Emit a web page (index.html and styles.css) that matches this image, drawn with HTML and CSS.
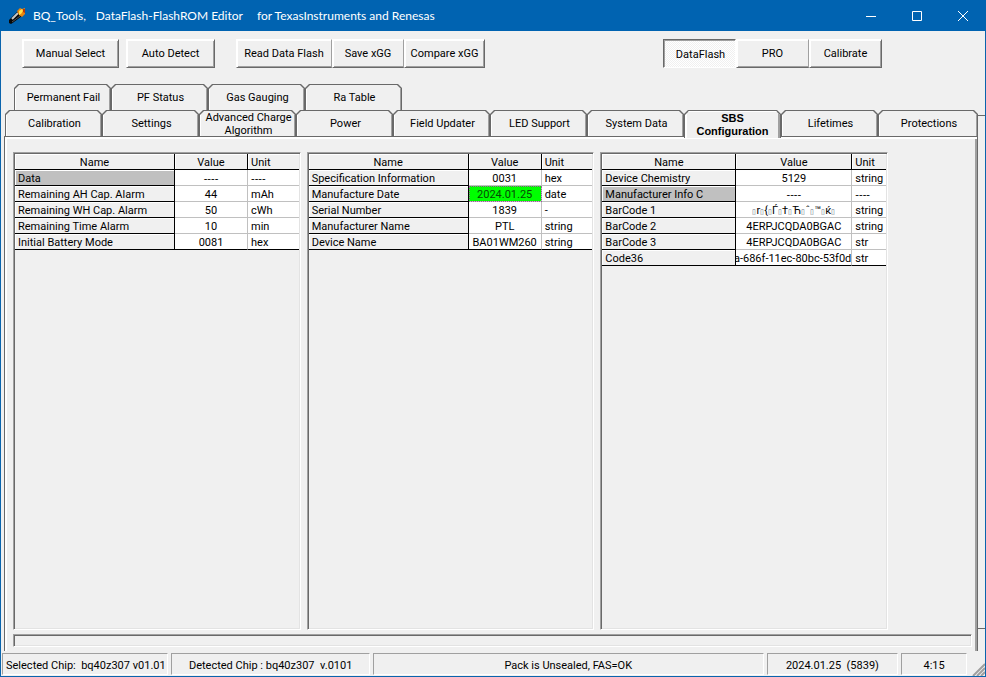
FILE: index.html
```html
<!DOCTYPE html>
<html lang="en">
<head>
  <meta charset="utf-8">
  <meta name="viewport" content="width=device-width,initial-scale=1">
  <title>BQ_Tools, DataFlash-FlashROM Editor</title>
  <link rel="stylesheet" href="styles.css">
</head>
<body>
  <div class="window">
    <header class="titlebar">
      <svg class="app-icon" width="16" height="16" viewBox="0 0 16 16" aria-hidden="true">
        <path d="M0 12 9 3l4 5-8 6-3 2-2-1z" fill="#080808"/>
        <path d="M3 11 9 5" stroke="#c8c8c8" stroke-width="2"/>
        <path d="M3 14l8-6" stroke="#555" stroke-width="1"/>
        <path d="M8 3l3-3 2 1 3-1v6l-3 3-3-2z" fill="#e8850c"/>
        <path d="M10 3l3-2 1 2-2 3-2 1z" fill="#ffe14a"/>
        <path d="M14 1h2v4l-2-1z" fill="#b8360a"/>
      </svg>
      <h1 class="title"><span>BQ_Tools,</span><span>DataFlash-FlashROM Editor</span><span class="title-for">for TexasInstruments and Renesas</span></h1>
      <div class="window-buttons">
        <button type="button" aria-label="Minimize"><svg width="12" height="12" viewBox="0 0 12 12"><path d="M1 6.5h10"/></svg></button>
        <button type="button" aria-label="Maximize"><svg width="12" height="12" viewBox="0 0 12 12"><path d="M1.5 1.5h9v9h-9z"/></svg></button>
        <button type="button" aria-label="Close"><svg width="12" height="12" viewBox="0 0 12 12"><path d="M1 1l10 10M11 1L1 11"/></svg></button>
      </div>
    </header>

    <div class="toolbar">
      <button type="button" class="btn btn-manual">Manual Select</button>
      <button type="button" class="btn btn-auto">Auto Detect</button>
      <div class="btn-group">
        <button type="button" class="btn btn-read">Read Data Flash</button>
        <button type="button" class="btn btn-save">Save xGG</button>
        <button type="button" class="btn btn-compare">Compare xGG</button>
      </div>
      <div class="btn-group modes">
        <button type="button" class="btn btn-mode pressed" aria-pressed="true">DataFlash</button>
        <button type="button" class="btn btn-mode">PRO</button>
        <button type="button" class="btn btn-mode">Calibrate</button>
      </div>
    </div>

    <nav class="tabs" role="tablist">
      <div class="tab-row tab-row-back">
        <button type="button" role="tab" class="tab">Permanent Fail</button>
        <button type="button" role="tab" class="tab">PF Status</button>
        <button type="button" role="tab" class="tab">Gas Gauging</button>
        <button type="button" role="tab" class="tab">Ra Table</button>
      </div>
      <div class="tab-row">
        <button type="button" role="tab" class="tab">Calibration</button>
        <button type="button" role="tab" class="tab">Settings</button>
        <button type="button" role="tab" class="tab">Advanced Charge Algorithm</button>
        <button type="button" role="tab" class="tab">Power</button>
        <button type="button" role="tab" class="tab">Field Updater</button>
        <button type="button" role="tab" class="tab">LED Support</button>
        <button type="button" role="tab" class="tab">System Data</button>
        <button type="button" role="tab" class="tab active" aria-selected="true">SBS Configuration</button>
        <button type="button" role="tab" class="tab">Lifetimes</button>
        <button type="button" role="tab" class="tab">Protections</button>
      </div>
    </nav>

    <main class="page">
      <div class="grids">
        <section class="grid-box">
          <table>
            <colgroup><col class="col-name"><col class="col-value"><col></colgroup>
            <thead>
              <tr><th>Name</th><th>Value</th><th>Unit</th></tr>
            </thead>
            <tbody>
              <tr class="group"><th>Data</th><td>----</td><td>----</td></tr>
              <tr><th>Remaining AH Cap. Alarm</th><td>44</td><td>mAh</td></tr>
              <tr><th>Remaining WH Cap. Alarm</th><td>50</td><td>cWh</td></tr>
              <tr><th>Remaining Time Alarm</th><td>10</td><td>min</td></tr>
              <tr><th>Initial Battery Mode</th><td>0081</td><td>hex</td></tr>
            </tbody>
          </table>
        </section>
        <section class="grid-box">
          <table>
            <colgroup><col class="col-name"><col class="col-value"><col></colgroup>
            <thead>
              <tr><th>Name</th><th>Value</th><th>Unit</th></tr>
            </thead>
            <tbody>
              <tr><th>Specification Information</th><td>0031</td><td>hex</td></tr>
              <tr><th>Manufacture Date</th><td class="selected">2024.01.25</td><td>date</td></tr>
              <tr><th>Serial Number</th><td>1839</td><td>-</td></tr>
              <tr><th>Manufacturer Name</th><td>PTL</td><td>string</td></tr>
              <tr><th>Device Name</th><td>BA01WM260</td><td>string</td></tr>
            </tbody>
          </table>
        </section>
        <section class="grid-box">
          <table>
            <colgroup><col class="col-name-short"><col class="col-value-wide"><col></colgroup>
            <thead>
              <tr><th>Name</th><th>Value</th><th>Unit</th></tr>
            </thead>
            <tbody>
              <tr><th>Device Chemistry</th><td>5129</td><td>string</td></tr>
              <tr class="group"><th>Manufacturer Info C</th><td>----</td><td>----</td></tr>
              <tr><th>BarCode 1</th><td><div class="raw"><i>▯</i>r<i>▯</i>{<i>▯</i>Ѓ<i>▯</i>†<i>▯</i>Ћ<i>▯</i>ˆ<i>▯</i>™<i>▯</i>ќ<i>▯</i></div></td><td>string</td></tr>
              <tr><th>BarCode 2</th><td>4ERPJCQDA0BGAC</td><td>string</td></tr>
              <tr><th>BarCode 3</th><td>4ERPJCQDA0BGAC</td><td>str</td></tr>
              <tr><th>Code36</th><td><div class="clipped">a-686f-11ec-80bc-53f0d</div></td><td>str</td></tr>
            </tbody>
          </table>
        </section>
      </div>
      <div class="progress"></div>
    </main>

    <footer class="statusbar">
      <div class="status status-left">Selected Chip:&nbsp; bq40z307 v01.01</div>
      <div class="status">Detected Chip : bq40z307&nbsp; v.0101</div>
      <div class="status">Pack is Unsealed, FAS=OK</div>
      <div class="status">2024.01.25&nbsp; (5839)</div>
      <div class="status">4:15</div>
      <svg class="grip" width="13" height="13" viewBox="0 0 13 13" aria-hidden="true">
        <path d="M1 13 13 1M5 13l8-8M9 13l4-4" stroke="#a0a0a0" stroke-width="2"/>
      </svg>
    </footer>
  </div>
</body>
</html>
```
FILE: styles.css
```css
* { box-sizing: border-box; }
body { margin: 0; background: #f0f0f0; color: #000; font: 11px/13px Roboto, "Liberation Sans", Arial, sans-serif; }
button { font: inherit; color: inherit; }

.window { display: flex; flex-direction: column; min-height: 100vh; border: 1px solid #0a64ad; border-top: 0; }

.titlebar { display: flex; align-items: center; height: 31px; margin: 0 -1px; padding-left: 9px; background: #0063b1; color: #fff; }
.title { display: flex; gap: 10px; margin: 0 0 0 8px; font: 12px/16px Lato, "Open Sans", sans-serif; white-space: pre; }
.title-for { margin-left: 4px; }
.window-buttons { display: flex; margin-left: auto; }
.window-buttons button { display: flex; align-items: center; justify-content: center; width: 46px; height: 31px; padding: 0; border: 0; background: none; }
.window-buttons path { fill: none; stroke: #fff; stroke-width: 1; }

/* toolbar */
.toolbar { display: flex; padding: 8px 103px 16px 21px; }
.btn { height: 29px; padding: 0; background: #f0f0f0; border: 1px solid; border-color: #fff #696969 #696969 #fff; box-shadow: inset 1px 1px #fff, inset -1px -1px #a0a0a0; white-space: nowrap; }
.btn-manual { width: 97px; margin-right: 7px; }
.btn-auto { width: 89px; margin-right: 21px; }
.btn-group { display: flex; }
.btn-group .btn:not(:last-child) { border-right-color: #a0a0a0; box-shadow: inset 1px 1px #fff, inset 0 -1px #a0a0a0; }
.btn-read { width: 96px; }
.btn-save { width: 72px; }
.btn-compare { width: 81px; }
.btn-mode { width: 73px; }
.modes { margin-left: auto; }
.modes .btn.pressed { border-color: #696969 #fff #fff #696969; box-shadow: inset 1px 1px #a0a0a0; background: repeating-conic-gradient(#fff 0 25%, #f0f0f0 0 50%) 0 0 / 2px 2px; padding: 2px 0 0 2px; }

/* tabs */
.tabs { padding: 0 7px 0 4px; }
.tab-row { display: grid; grid-template-columns: repeat(9, 97fr) 100fr; }
.tab-row-back { margin: 0 -9px 0 9px; }
.tab { position: relative; isolation: isolate; height: 26px; padding: 1px 0 0 2px; border: 0; background: #696969; clip-path: polygon(0 4px, 4px 0, calc(100% - 4px) 0, 100% 4px, 100% 100%, 0 100%); }
.tab::before { content: ""; position: absolute; z-index: -1; inset: 1px 1px 0 1px; background: linear-gradient(#a0a0a0, #a0a0a0) right / 1px 100% no-repeat, linear-gradient(90deg, #fff 1px, #f0f0f0 1px); clip-path: polygon(0 4px, 4px 0, calc(100% - 4px) 0, 100% 4px, 100% 100%, 0 100%); }
.tab.active { height: 28px; margin-bottom: -2px; z-index: 1; padding: 2px 8px 0; font-family: "Liberation Sans", Arial, sans-serif; font-weight: bold; }
.tab.active::before { background: linear-gradient(#a0a0a0, #a0a0a0) right / 2px 100% no-repeat, linear-gradient(#fff, #fff) top / 100% 1px no-repeat, linear-gradient(90deg, #fff 2px, #f0f0f0 2px); }

/* tab page */
.page { position: relative; display: flex; flex-direction: column; flex: 1; margin: 0 7px 0 3px; padding: 15px 5px 4px 8px; border: 1px solid #696969; border-bottom: 0; box-shadow: inset 2px 2px #fff, inset -2px 0 #a0a0a0; }
.page::after { content: ""; position: absolute; top: -22px; bottom: 22px; right: -8px; width: 8px; border: solid #696969; border-width: 1px 0; pointer-events: none; }
.grids { display: grid; grid-template-columns: repeat(3, 1fr); gap: 6px; flex: 1; padding-right: 84px; }
.grid-box, .progress { padding: 1px; border: 1px solid; border-color: #a0a0a0 #fff #fff #a0a0a0; box-shadow: inset 1px 1px #696969, inset -1px -1px #e3e3e3; }
.progress { height: 13px; margin-top: 4px; }

table { width: 100%; table-layout: fixed; border-collapse: separate; border-spacing: 0; background: #fff; }
.col-name { width: 160px; }
.col-value { width: 73px; }
.col-name-short { width: 134px; }
.col-value-wide { width: 116px; }
th, td { height: 16px; padding: 2px 0 0 3px; border-right: 1px solid #c0c0c0; border-bottom: 1px solid #c0c0c0; font-weight: normal; text-align: left; white-space: nowrap; overflow: hidden; }
th { background: #f0f0f0; border-color: #000; box-shadow: inset 1px 1px #fff; }
th:last-child, td:last-child { border-right: 0; }
thead th:not(:last-child), td:nth-child(2) { padding-left: 0; text-align: center; }
tbody tr:last-child td { border-bottom-color: #000; }
.group th { background: #c0c0c0; }
.group td { font-family: "Liberation Sans", Arial, sans-serif; }
td.selected { background: #0f0; color: #064a06; outline: 1px dotted #a05aa0; outline-offset: -1px; }
/* long codes keep their tail visible */
.clipped { display: flex; justify-content: flex-end; overflow: hidden; }
.raw { height: 13px; }
.raw i { color: #5a6a7a; font-size: 7px; font-style: normal; }

/* status bar */
.statusbar { position: relative; display: grid; grid-template-columns: 167fr 199fr 392fr 132fr 66fr; gap: 3px; padding: 2px 18px 1px 1px; }
.status { height: 22px; padding-top: 5px; border: 1px solid; border-color: #a0a0a0 #fff #fff #a0a0a0; text-align: center; white-space: nowrap; overflow: hidden; }
.status-left { padding-left: 3px; text-align: left; }
.grip { position: absolute; right: 0; bottom: 0; }
```
